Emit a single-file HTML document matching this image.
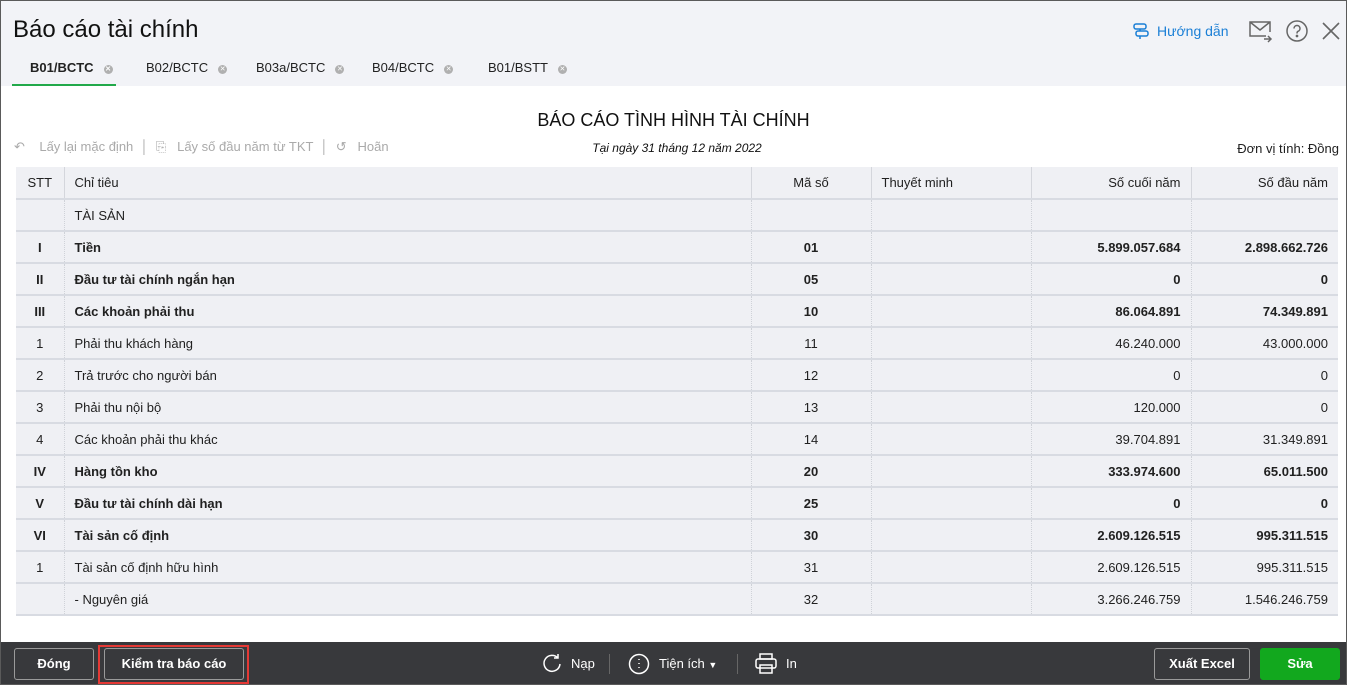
<!DOCTYPE html>
<html><head><meta charset="utf-8"><style>
*{box-sizing:border-box;margin:0;padding:0}
body{width:1347px;height:685px;overflow:hidden;font-family:"Liberation Sans",sans-serif;font-size:13px;color:#212121;background:#fff;position:relative}
.frame{position:absolute;inset:0;border:1px solid #5a5a5a;}
.top{position:absolute;left:1px;top:1px;width:1345px;height:85px;background:#f2f3f7}
.title{position:absolute;left:13px;top:16px;font-size:24px;color:#111}
.tab{position:absolute;top:60px;font-size:13px;color:#222}
.tab i{font-style:normal;display:inline-block;width:9px;height:9px;border-radius:50%;background:#b0b0b0;color:#fff;font-size:7px;line-height:9px;text-align:center;margin-left:10px;vertical-align:1px}
.ab{position:absolute}
table{position:absolute;left:16px;top:167px;width:1322px;border-collapse:collapse;table-layout:fixed}
td{height:32px;background:#eff0f4;border-bottom:2px solid #d8dbe2;border-left:1px dotted #cfd2d8;padding:0 10px;white-space:nowrap}
td:first-child{border-left:none;text-align:center}
tr.h td{border-left:1px solid #d4d6dc}
tr.h td:first-child{border-left:none}
td.c{text-align:center}td.r{text-align:right}
tr.b td{font-weight:bold}
.foot{position:absolute;left:1px;top:642px;width:1345px;height:42px;background:#38393c}
.btn{position:absolute;top:648px;height:32px;border:1px solid #9a9a9a;border-radius:3px;color:#fff;font-weight:bold;font-size:13px;line-height:30px;text-align:center}
.ft{position:absolute;top:656px;color:#fff;font-size:13px}
</style></head><body>
<div class="top"></div>
<div class="title">Báo cáo tài chính</div>
<div class="tab" style="left:30px;font-weight:bold">B01/BCTC<i>✕</i></div>
<div class="ab" style="left:12px;top:84px;width:104px;height:2px;background:#22a94a"></div>
<div class="tab" style="left:146px">B02/BCTC<i>✕</i></div>
<div class="tab" style="left:256px">B03a/BCTC<i>✕</i></div>
<div class="tab" style="left:372px">B04/BCTC<i>✕</i></div>
<div class="tab" style="left:488px">B01/BSTT<i>✕</i></div>
<svg class="ab" style="left:1132px;top:22px" width="18" height="18" viewBox="0 0 18 18" fill="none" stroke="#1b7fd6" stroke-width="1.5"><rect x="2" y="2" width="12" height="5" rx="2"/><rect x="4" y="9" width="12" height="5" rx="2"/><path d="M8 7v2M8 14v3"/></svg>
<div class="ab" style="left:1157px;top:23px;color:#1b7fd6;font-size:14px">Hướng dẫn</div>
<svg class="ab" style="left:1249px;top:21px" width="24" height="22" viewBox="0 0 24 22" fill="none" stroke="#666" stroke-width="1.5"><path d="M17 15H1V1h20v10M1 1l10 8 10-8M15 18h7M19 15l3 3-3 3"/></svg>
<svg class="ab" style="left:1286px;top:20px" width="22" height="22" viewBox="0 0 22 22" fill="none" stroke="#666" stroke-width="1.5"><circle cx="11" cy="11" r="10"/><path d="M8 8.5a3 3 0 1 1 4 2.8c-1 .4-1 1-1 2.2"/><circle cx="11" cy="16" r=".6" fill="#666"/></svg>
<svg class="ab" style="left:1321px;top:21px" width="20" height="20" viewBox="0 0 20 20" stroke="#666" stroke-width="1.6"><path d="M2 2l16 16M18 2L2 18"/></svg>
<div class="ab" style="left:0;width:1347px;top:110px;text-align:center;font-size:18px;color:#111">BÁO CÁO TÌNH HÌNH TÀI CHÍNH</div>
<div class="ab" style="left:0;width:1354px;top:141px;text-align:center;font-size:12px;font-style:italic;color:#111">Tại ngày 31 tháng 12 năm 2022</div>
<div class="ab" style="right:8px;top:141px;font-size:13px">Đơn vị tính: Đồng</div>
<div class="ab" style="left:14px;top:139px;color:#aaa;font-size:13px">↶ &nbsp;&nbsp; Lấy lại mặc định &nbsp;│&nbsp; ⎘ &nbsp;&nbsp;Lấy số đầu năm từ TKT &nbsp;│&nbsp; ↺ &nbsp;&nbsp;Hoãn</div>
<table>
<colgroup><col style="width:48px"><col style="width:687px"><col style="width:120px"><col style="width:160px"><col style="width:160px"><col style="width:147px"></colgroup>
<tr class="h"><td>STT</td><td>Chỉ tiêu</td><td class="c">Mã số</td><td>Thuyết minh</td><td class="r">Số cuối năm</td><td class="r">Số đầu năm</td></tr>
<tr><td></td><td>TÀI SẢN</td><td></td><td></td><td></td><td></td></tr>
<tr class="b"><td>I</td><td>Tiền</td><td class="c">01</td><td></td><td class="r">5.899.057.684</td><td class="r">2.898.662.726</td></tr>
<tr class="b"><td>II</td><td>Đầu tư tài chính ngắn hạn</td><td class="c">05</td><td></td><td class="r">0</td><td class="r">0</td></tr>
<tr class="b"><td>III</td><td>Các khoản phải thu</td><td class="c">10</td><td></td><td class="r">86.064.891</td><td class="r">74.349.891</td></tr>
<tr><td>1</td><td>Phải thu khách hàng</td><td class="c">11</td><td></td><td class="r">46.240.000</td><td class="r">43.000.000</td></tr>
<tr><td>2</td><td>Trả trước cho người bán</td><td class="c">12</td><td></td><td class="r">0</td><td class="r">0</td></tr>
<tr><td>3</td><td>Phải thu nội bộ</td><td class="c">13</td><td></td><td class="r">120.000</td><td class="r">0</td></tr>
<tr><td>4</td><td>Các khoản phải thu khác</td><td class="c">14</td><td></td><td class="r">39.704.891</td><td class="r">31.349.891</td></tr>
<tr class="b"><td>IV</td><td>Hàng tồn kho</td><td class="c">20</td><td></td><td class="r">333.974.600</td><td class="r">65.011.500</td></tr>
<tr class="b"><td>V</td><td>Đầu tư tài chính dài hạn</td><td class="c">25</td><td></td><td class="r">0</td><td class="r">0</td></tr>
<tr class="b"><td>VI</td><td>Tài sản cố định</td><td class="c">30</td><td></td><td class="r">2.609.126.515</td><td class="r">995.311.515</td></tr>
<tr><td>1</td><td>Tài sản cố định hữu hình</td><td class="c">31</td><td></td><td class="r">2.609.126.515</td><td class="r">995.311.515</td></tr>
<tr><td></td><td>- Nguyên giá</td><td class="c">32</td><td></td><td class="r">3.266.246.759</td><td class="r">1.546.246.759</td></tr>
</table>
<div class="foot"></div>
<div class="btn" style="left:14px;width:80px">Đóng</div>
<div class="ab" style="left:98px;top:645px;width:151px;height:39px;border:2px solid #e53935"></div>
<div class="btn" style="left:104px;width:140px">Kiểm tra báo cáo</div>
<svg class="ab" style="left:541px;top:653px" width="22" height="22" viewBox="0 0 22 22" fill="none" stroke="#fff" stroke-width="1.5"><path d="M17 5A8 8 0 1 0 19 11M17 1v4h-4"/></svg>
<div class="ft" style="left:571px">Nạp</div>
<div class="ab" style="left:609px;top:654px;width:1px;height:20px;background:#666"></div>
<svg class="ab" style="left:628px;top:653px" width="22" height="22" viewBox="0 0 22 22" fill="none" stroke="#fff" stroke-width="1.5"><circle cx="11" cy="11" r="9.5"/><path d="M11 6v1M11 10v1M11 14v1"/></svg>
<div class="ft" style="left:659px">Tiện ích <span style="font-size:9px">▼</span></div>
<div class="ab" style="left:737px;top:654px;width:1px;height:20px;background:#666"></div>
<svg class="ab" style="left:755px;top:653px" width="22" height="22" viewBox="0 0 22 22" fill="none" stroke="#fff" stroke-width="1.5"><rect x="5" y="1" width="12" height="5"/><rect x="1" y="6" width="20" height="9" rx="2"/><rect x="5" y="12" width="12" height="8"/></svg>
<div class="ft" style="left:786px">In</div>
<div class="btn" style="left:1154px;width:96px">Xuất Excel</div>
<div class="btn" style="left:1260px;width:80px;background:#12a81e;border-color:#12a81e">Sửa</div>
<div class="frame"></div>
</body></html>
